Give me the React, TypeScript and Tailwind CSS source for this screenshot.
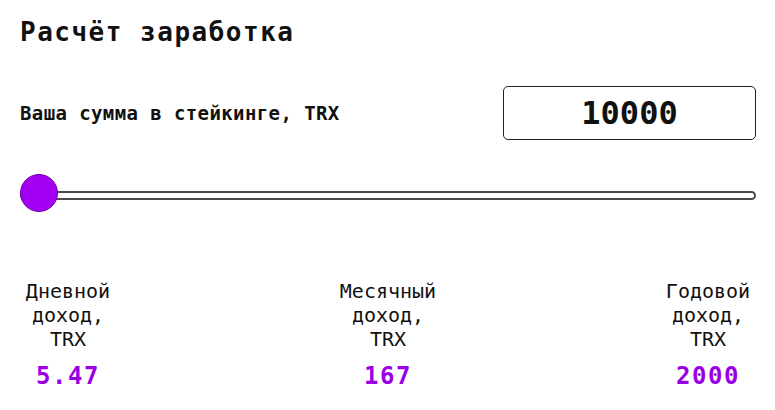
import React from "react";

const mono = { fontFamily: '"DejaVu Sans Mono", "Liberation Mono", monospace' };

function Result({ label, value }: { label: string; value: string }) {
  return (
    <div className="flex w-[100px] shrink-0 flex-col items-center text-center">
      <div className="text-[20px] leading-[24px] text-[#111]">{label}</div>
      <div className="mt-[13px] text-[24px] font-bold leading-[24px] tracking-[1.5px] text-[#9a00e6]">
        {value}
      </div>
    </div>
  );
}

export default function App() {
  return (
    <div className="h-[410px] w-[775px] overflow-hidden bg-white text-[#111]" style={mono}>
      <div className="pl-5 pr-[19px]">
        <h1 className="mt-[19px] text-[26px] font-bold leading-[26px] tracking-[1.5px]">
          Расчёт заработка
        </h1>

        <div className="mt-[41px] flex h-[54px] items-center justify-between">
          <label className="text-[19px] font-bold leading-[19px] tracking-[0.4px]">
            Ваша сумма в стейкинге, TRX
          </label>
          <div className="flex h-[54px] w-[253px] items-center justify-center rounded-[5px] border border-[#222] text-[32px] font-bold leading-[32px]">
            10000
          </div>
        </div>

        <div className="relative mt-[34px] h-[38px]">
          <div className="absolute left-0 right-0 top-[17px] h-[9px] rounded-full border-2 border-[#4a4a4a] bg-white" />
          <div className="absolute left-0 top-0 h-[38px] w-[38px] rounded-full border border-[#6e00a6] bg-[#a100f2]" />
        </div>
      </div>

      <div className="mt-[67px] flex justify-between pl-[18px] pr-[17px]">
        <Result label="Дневной доход, TRX" value="5.47" />
        <Result label="Месячный доход, TRX" value="167" />
        <Result label="Годовой доход, TRX" value="2000" />
      </div>
    </div>
  );
}
